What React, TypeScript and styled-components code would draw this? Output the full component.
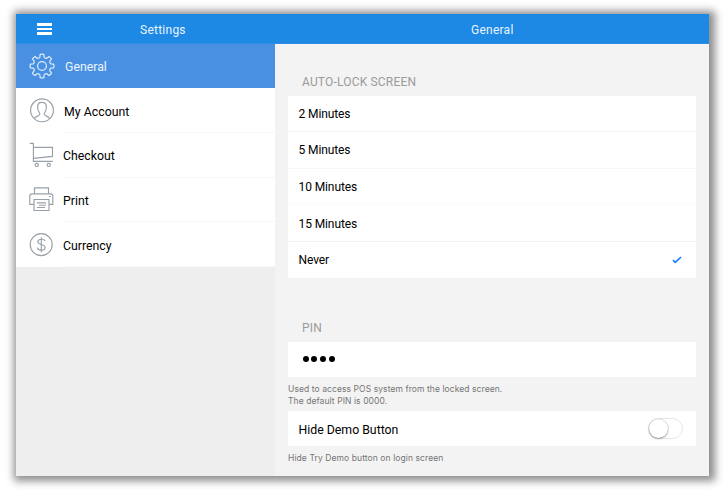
import React from 'react';
import styled, { createGlobalStyle } from 'styled-components';

const GlobalStyle = createGlobalStyle`
  * { box-sizing: border-box; }
  body { margin: 0; background: #fff; font-family: Roboto, sans-serif; overflow: hidden; }
`;

const Page = styled.div`
  width: 726px;
  height: 490px;
  padding: 14px 17px 14px 16px;
`;

const Window = styled.main`
  width: 693px;
  height: 462px;
  display: grid;
  grid-template: 30px 1fr / 259px 1fr;
  background: #f3f3f3;
  box-shadow: 2px 1px 8px 4px rgba(0, 0, 0, 0.45);
`;

const TopBar = styled.header`
  grid-column: 1 / -1;
  display: grid;
  grid-template-columns: 259px 1fr;
  background: #1e88e5;
  border-bottom: 1px solid #2f8de6;
`;

const BarSection = styled.div`
  display: flex;
  align-items: center;
`;

const MenuButton = styled.button`
  display: flex;
  flex-direction: column;
  gap: 2px;
  width: 15px;
  margin: 1px 0 0 21px;
  padding: 0;
  border: 0;
  background: none;
`;

const MenuLine = styled.span`
  height: 3px;
  width: 15px;
  background: #fff;
  &:nth-child(2) { height: 2px; }
`;

const BarTitle = styled.h1<{ $indent: number }>`
  margin: 2px 0 0 ${(p) => p.$indent}px;
  font-size: 12px;
  line-height: 16px;
  font-weight: 400;
  letter-spacing: 0.25px;
  color: #e9f4fd;
`;

const Sidebar = styled.nav`
  display: flex;
  flex-direction: column;
  background: #eee;
`;

const NavItem = styled.a<{ $active?: boolean }>`
  display: flex;
  height: 44.6px;
  flex: none;
  background: ${(p) => (p.$active ? '#4a90e2' : '#fff')};
  color: ${(p) => (p.$active ? '#edf5fd' : '#000')};
  &:first-child { height: 44.4px; }
`;

const NavIcon = styled.svg<{ $drop: number }>`
  flex: none;
  width: 28px;
  height: 28px;
  margin: ${(p) => 8 + p.$drop}px 0 0 12px;
  fill: none;
  stroke: currentColor;
  stroke-width: 1.15;
`;

const IconSlot = styled.span<{ $active?: boolean }>`
  flex: none;
  display: flex;
  width: 47px;
  color: ${(p) => (p.$active ? '#dcebfa' : '#98a1a9')};
`;

const NavLabel = styled.span<{ $shift: number; $spacing: number }>`
  flex: 1;
  padding: 15.3px 0 0 ${(p) => p.$shift}px;
  border-bottom: 1px solid #f7f7f7;
  font-size: 12.3px;
  line-height: 16px;
  letter-spacing: ${(p) => p.$spacing}px;
  ${NavItem}:first-child & { border-bottom: 0; }
  ${NavItem}:last-child & { padding-top: 16px; }
`;

const Content = styled.section`
  padding: 30px 13px 0;
`;

const GroupTitle = styled.h2<{ $top: number; $spacing: number }>`
  margin: ${(p) => p.$top}px 0 0 14px;
  font-size: 12px;
  line-height: 16px;
  height: 22px;
  font-weight: 400;
  letter-spacing: ${(p) => p.$spacing}px;
  color: #9b9b9b;
`;

const Card = styled.div`
  background: #fff;
`;

const Row = styled.div<{ $h: number; $line?: string }>`
  display: flex;
  align-items: center;
  justify-content: space-between;
  height: ${(p) => p.$h}px;
  padding: 0 13px 0 10.5px;
  border-bottom: 1px solid ${(p) => p.$line ?? '#fff'};
  font-size: 12px;
  color: #000;
`;

const RowText = styled.span<{ $size?: number; $spacing?: number; $drop?: number }>`
  padding-top: ${(p) => p.$drop ?? 0}px;
  font-size: ${(p) => p.$size ?? 12}px;
  line-height: 16px;
  letter-spacing: ${(p) => p.$spacing ?? -0.1}px;
`;

const Check = styled.svg`
  width: 10px;
  height: 8px;
  margin-right: 1px;
  fill: none;
  stroke: #147efb;
  stroke-width: 1.7;
`;

const PinDots = styled.div`
  display: flex;
  gap: 2.7px;
  padding: 0 0 0 4.3px;
`;

const Dot = styled.span`
  width: 6px;
  height: 6px;
  border-radius: 50%;
  background: #000;
`;

const Help = styled.p<{ $h: number; $spacing: number }>`
  margin: 0;
  padding-top: 6px;
  height: ${(p) => p.$h}px;
  font-family: Inter, sans-serif;
  font-size: 8.5px;
  line-height: 12px;
  letter-spacing: ${(p) => p.$spacing}px;
  color: #757575;
  white-space: nowrap;
`;

const Toggle = styled.span`
  width: 35px;
  height: 21px;
  border-radius: 11px;
  border: 1px solid #e6e6e6;
  background: #fff;
`;

const Knob = styled.span`
  display: block;
  width: 19px;
  height: 19px;
  border-radius: 50%;
  background: #fff;
  box-shadow: 0 1px 2px rgba(0, 0, 0, 0.35), 0 0 1px rgba(0, 0, 0, 0.35);
`;

const teeth = 8;
const gearPath = (() => {
  const point = (r: number, deg: number) => {
    const a = (deg * Math.PI) / 180;
    return `${(14 + r * Math.cos(a)).toFixed(2)} ${(14 + r * Math.sin(a)).toFixed(2)}`;
  };
  let d = '';
  for (let i = 0; i < teeth; i++) {
    const c = i * 45 - 90;
    d += `${i ? 'L' : 'M'}${point(9.2, c - 13)} L${point(11.8, c - 9)} Q${point(12.2, c)} ${point(11.8, c + 9)} L${point(9.2, c + 13)} Q${point(8, c + 22.5)} ${point(9.2, c + 32)} `;
  }
  return d + 'Z';
})();

const icons = {
  gear: (
    <>
      <path d={gearPath} strokeWidth="1.25" strokeLinejoin="round" />
      <circle cx="14" cy="14" r="4.4" strokeWidth="1.25" />
    </>
  ),
  user: (
    <>
      <circle cx="14" cy="13.3" r="11.4" />
      <path d="M6.4 21.5C7.4 18.9 11.9 19.2 11.9 17.1C11.9 15.7 9.6 14.5 9.6 10.2C9.6 7 11.4 5.3 14 5.3S18.4 7 18.4 10.2C18.4 14.5 16.1 15.7 16.1 17.1C16.1 19.2 20.6 18.9 21.6 21.5" />
    </>
  ),
  cart: (
    <>
      <path d="M1.8 1.4H5.4V19.4H24.8M5.4 5.4H24.5V14.4L5.4 16.4" />
      <circle cx="8.7" cy="22.9" r="1.6" />
      <circle cx="20.8" cy="22.9" r="1.6" />
    </>
  ),
  printer: (
    <>
      <path d="M6.5 7.8V1.8H20.5V7.8M6 18.4H1.8V10Q1.8 7.8 4 7.8H22.6Q24.8 7.8 24.8 10V18.4H21M6 13.5H21V24.5H6ZM9 16.9H18M11 19.2H18M9 21.5H17M21 10.5H23" />
    </>
  ),
  currency: (
    <>
      <circle cx="13.2" cy="12.6" r="11" />
      <path d="M17 9.1Q16.4 7.2 13.3 7.2T9.7 9.8C9.7 13.2 17.1 11.8 17.1 15.5Q17.1 18.1 13.4 18.1T9.4 15.6M13.3 5.2V20.2" />
    </>
  ),
};

const navItems: {
  icon: keyof typeof icons;
  label: string;
  shift: number;
  spacing: number;
  drop: number;
  active?: boolean;
}[] = [
  { icon: 'gear', label: 'General', shift: 2, spacing: 0, drop: 0, active: true },
  { icon: 'user', label: 'My Account', shift: 1, spacing: 0.03, drop: 0.3 },
  { icon: 'cart', label: 'Checkout', shift: 0, spacing: 0, drop: 0.6 },
  { icon: 'printer', label: 'Print', shift: 0, spacing: 0, drop: 0.9 },
  { icon: 'currency', label: 'Currency', shift: 0, spacing: 0, drop: 1.4 },
];

const lockOptions = [
  { label: '2 Minutes', h: 36, line: '#f3f3f3' },
  { label: '5 Minutes', h: 37, line: '#f6f6f6' },
  { label: '10 Minutes', h: 36, line: '#fbfbfb' },
  { label: '15 Minutes', h: 37, line: '#f1f1f1', drop: 1 },
  { label: 'Never', h: 36, line: '#fff', checked: true },
];

export default function App() {
  return (
    <Page>
      <GlobalStyle />
      <Window>
        <TopBar>
          <BarSection>
            <MenuButton aria-label="Menu">
              <MenuLine />
              <MenuLine />
              <MenuLine />
            </MenuButton>
            <BarTitle $indent={88}>Settings</BarTitle>
          </BarSection>
          <BarSection>
            <BarTitle $indent={196}>General</BarTitle>
          </BarSection>
        </TopBar>
        <Sidebar>
          {navItems.map((n) => (
            <NavItem key={n.label} $active={n.active}>
              <IconSlot $active={n.active}>
                <NavIcon viewBox="0 0 28 28" $drop={n.drop}>{icons[n.icon]}</NavIcon>
              </IconSlot>
              <NavLabel $shift={n.shift} $spacing={n.spacing}>{n.label}</NavLabel>
            </NavItem>
          ))}
        </Sidebar>
        <Content>
          <GroupTitle $top={0} $spacing={0.18}>AUTO-LOCK SCREEN</GroupTitle>
          <Card>
            {lockOptions.map((o) => (
              <Row key={o.label} $h={o.h} $line={o.line}>
                <RowText $drop={o.drop}>{o.label}</RowText>
                {o.checked && (
                  <Check viewBox="0 0 10 8">
                    <path d="M1 4.2L3.3 6.4L9 1" />
                  </Check>
                )}
              </Row>
            ))}
          </Card>
          <GroupTitle $top={42} $spacing={0.2}>PIN</GroupTitle>
          <Card>
            <Row $h={35}>
              <PinDots>
                <Dot />
                <Dot />
                <Dot />
                <Dot />
              </PinDots>
            </Row>
          </Card>
          <Help $h={34} $spacing={0.08}>
            Used to access POS system from the locked screen.
            <br />
            The default PIN is 0000.
          </Help>
          <Card>
            <Row $h={35}>
              <RowText $size={12.3} $spacing={0} $drop={3}>Hide Demo Button</RowText>
              <Toggle>
                <Knob />
              </Toggle>
            </Row>
          </Card>
          <Help $h={24} $spacing={0.09}>Hide Try Demo button on login screen</Help>
        </Content>
      </Window>
    </Page>
  );
}
